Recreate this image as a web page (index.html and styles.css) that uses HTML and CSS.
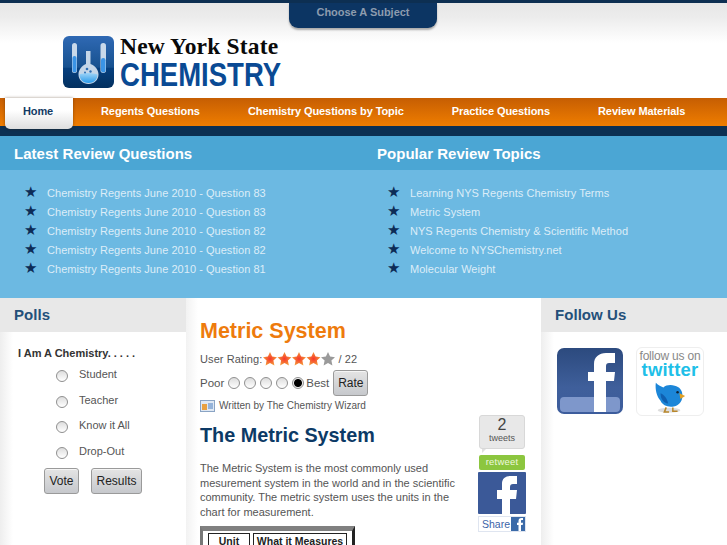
FILE: index.html
```html
<!DOCTYPE html>
<html lang="en">
<head>
<meta charset="utf-8">
<title>New York State Chemistry</title>
<link rel="stylesheet" href="styles.css">
</head>
<body>
<header class="header">
  <div class="subject-wrap"><a class="subject-tab">Choose A Subject</a></div>
  <div class="logo">
    <svg class="logo-icon" width="51" height="52" viewBox="0 0 51 52">
      <defs>
        <linearGradient id="lg1" x1="0" y1="0" x2="0" y2="1"><stop offset="0" stop-color="#2f69b4"/><stop offset="0.6" stop-color="#17518f"/><stop offset="0.62" stop-color="#063f7e"/><stop offset="1" stop-color="#03305f"/></linearGradient>
        <linearGradient id="lg2" x1="0" y1="0" x2="0" y2="1"><stop offset="0" stop-color="#9fd4f7"/><stop offset="1" stop-color="#2a9bea"/></linearGradient>
      </defs>
      <rect width="51" height="52" rx="6" fill="url(#lg1)"/>
      <rect x="9" y="7" width="5" height="30" rx="2.5" fill="#c9d9ea"/>
      <rect x="9.5" y="20" width="4" height="16.5" rx="2" fill="#3a94e6"/>
      <rect x="37.5" y="7" width="5.5" height="30" rx="2.7" fill="#c9d9ea"/>
      <rect x="38" y="22" width="4.5" height="14.5" rx="2.2" fill="#3a94e6"/>
      <path d="M23 15h4.500v13c5 2 8 6 8 10.500 0 5.500-4.500 9.500-10 9.500s-10-4-10-9.500c0-4.500 3-8.500 7.500-10.500z" fill="#c4d6e8"/>
      <path d="M16.500 38.500c5-2 12-2 18 0 0 5-4 8.500-9 8.500s-9-3.500-9-8.500z" fill="url(#lg2)"/>
      <circle cx="24" cy="33" r="1.300" fill="#2c6fb5"/><circle cx="27.500" cy="35.500" r="1.200" fill="#2c6fb5"/><circle cx="22" cy="36.500" r="1" fill="#2c6fb5"/>
    </svg>
    <div class="logo-text">
      <div class="logo-ny">New York State</div>
      <div class="logo-chem">CHEMISTRY</div>
    </div>
  </div>
</header>

<nav class="nav">
  <a class="nav-item nav-home">Home</a>
  <a class="nav-item">Regents Questions</a>
  <a class="nav-item">Chemistry Questions by Topic</a>
  <a class="nav-item">Practice Questions</a>
  <a class="nav-item">Review Materials</a>
</nav>
<div class="nav-base"></div>

<section class="blue">
  <div class="blue-col">
    <h3 class="blue-head">Latest Review Questions</h3>
    <ul class="blue-list">
      <li>Chemistry Regents June 2010 - Question 83</li>
      <li>Chemistry Regents June 2010 - Question 83</li>
      <li>Chemistry Regents June 2010 - Question 82</li>
      <li>Chemistry Regents June 2010 - Question 82</li>
      <li>Chemistry Regents June 2010 - Question 81</li>
    </ul>
  </div>
  <div class="blue-col">
    <h3 class="blue-head">Popular Review Topics</h3>
    <ul class="blue-list">
      <li>Learning NYS Regents Chemistry Terms</li>
      <li>Metric System</li>
      <li>NYS Regents Chemistry &amp; Scientific Method</li>
      <li>Welcome to NYSChemistry.net</li>
      <li>Molecular Weight</li>
    </ul>
  </div>
</section>

<div class="columns">
  <aside class="side side-left">
    <h3 class="side-head">Polls</h3>
    <div class="poll">
      <div class="poll-q">I Am A Chemistry. . . . .</div>
      <label class="poll-opt"><input class="radio" type="radio" name="p"><span>Student</span></label>
      <label class="poll-opt"><input class="radio" type="radio" name="p"><span>Teacher</span></label>
      <label class="poll-opt"><input class="radio" type="radio" name="p"><span>Know it All</span></label>
      <label class="poll-opt"><input class="radio" type="radio" name="p"><span>Drop-Out</span></label>
      <div class="poll-btns"><button class="btn btn-vote">Vote</button><button class="btn btn-results">Results</button></div>
    </div>
  </aside>

  <main class="content">
    <h1 class="title">Metric System</h1>
    <div class="rating">User Rating:<span class="stars"><svg width="72" height="14" viewBox="0 0 72 14">
      <defs>
        <radialGradient id="rs"><stop offset="0" stop-color="#f8352b"/><stop offset="1" stop-color="#f39a3a"/></radialGradient>
        <path id="st" d="M7 0l2.100 4.600 4.900.600-3.600 3.400 1 5-4.400-2.500-4.400 2.500 1-5L0 5.200l4.900-.600z"/>
      </defs>
      <use href="#st" fill="url(#rs)"/><use href="#st" x="14.500" fill="url(#rs)"/><use href="#st" x="29" fill="url(#rs)"/><use href="#st" x="43.500" fill="url(#rs)"/><use href="#st" x="58" fill="#9a9a9a"/>
    </svg></span> / 22</div>
    <div class="rate-row">
      <span>Poor</span>
      <input class="radio radio-s" type="radio" name="r">
      <input class="radio radio-s" type="radio" name="r">
      <input class="radio radio-s" type="radio" name="r">
      <input class="radio radio-s" type="radio" name="r">
      <input class="radio radio-s" type="radio" name="r" checked>
      <span class="rate-best">Best</span>
      <button class="btn btn-rate">Rate</button>
    </div>
    <div class="author">
      <svg width="15" height="12" viewBox="0 0 15 12"><rect x=".5" y=".5" width="14" height="11" fill="#dfe8f3" stroke="#8aa4c4"/><rect x="2" y="4" width="5" height="6" fill="#e8a040"/><path d="M8 4h5M8 6h5M8 8h5" stroke="#4a7fc0"/></svg>
      <span>Written by The Chemistry Wizard</span>
    </div>
    <div class="article">
      <div class="article-main">
        <h2 class="article-title">The Metric System</h2>
        <p class="article-text">The Metric System is the most commonly used mesurement system in the world and in the scientific community. The metric system uses the units in the chart for measurement.</p>
        <div class="chart">
          <table class="chart-table"><tr><th class="chart-unit">Unit</th><th>What it Measures</th></tr></table>
        </div>
      </div>
      <div class="share">
        <div class="tweet-box"><span class="tweet-num">2</span><span class="tweet-lbl">tweets</span></div>
        <div class="retweet">retweet</div>
        <svg class="fb-big" width="48" height="42" viewBox="0 0 48 42"><rect width="48" height="42" rx="1" fill="#3b5998"/><path d="M24 42V27h-5v-9h5v-6c0-6 4-8 9-8h6v8h-4c-2 0-3 1-3 3v3h7l-1 9h-6v15z" fill="#fff"/></svg>
        <div class="fb-share"><span>Share</span><svg width="14" height="14" viewBox="0 0 14 14"><rect width="14" height="14" fill="#3b6aa8"/><path d="M7.500 14V8H6V5.800h1.500V4c0-2 1-3 3-3H12v2h-1c-.8 0-1 .4-1 1v1.800h2L11.700 8H10v6z" fill="#fff"/></svg></div>
      </div>
    </div>
  </main>

  <aside class="side side-right">
    <h3 class="side-head">Follow Us</h3>
    <div class="follow">
      <svg width="66" height="66" viewBox="0 0 66 66">
        <defs><linearGradient id="fbg" x1="0" y1="0" x2="0" y2="1"><stop offset="0" stop-color="#2c4a7e"/><stop offset="0.6" stop-color="#3f5f9b"/><stop offset="1" stop-color="#3c5c9c"/></linearGradient></defs>
        <rect width="66" height="66" rx="7" fill="url(#fbg)"/>
        <rect x="3" y="49" width="60" height="15" rx="4" fill="#7e97cb"/>
        <path d="M37 64V33h-6v-9h6v-8c0-7 5-11 12-11h9v10h-6c-2 0-3 1-3 3v6h9l-1 9h-8v31z" fill="#fff"/>
      </svg>
      <div class="tw-card">
        <div class="tw-follow">follow us on</div>
        <div class="tw-name">twitter</div>
        <svg width="34" height="34" viewBox="0 0 36 36">
          <ellipse cx="17" cy="32" rx="12" ry="2.500" fill="#ddd"/>
          <path d="M3 3c2 2 5 4 8 5 3-3 8-3 12-2 5 1 8 5 8 9 1 6-3 12-9 13-6 1-12-1-14-6C4 18 2 10 3 3z" fill="#1c86d8"/>
          <path d="M8 14c3 1 7 5 8 11-5-1-8-5-8-11z" fill="#0f5fb0"/>
          <path d="M28 14l6 3-5 3z" fill="#e3a020"/>
          <circle cx="26" cy="13" r="1.300" fill="#123"/>
          <path d="M14 29l-2 5h5M21 29l0 4h5" stroke="#b8862a" stroke-width="1.600" fill="none"/>
        </svg>
      </div>
    </div>
  </aside>
</div>
</body>
</html>
```

FILE: styles.css
```css
* { box-sizing: border-box; }
html, body { margin: 0; padding: 0; height: 545px; overflow: hidden; }
body { width: 727px; background: #fff; font-family: "Liberation Sans", Arial, sans-serif; color: #444; font-size: 11px; }

.header {
  height: 98px;
  border-top: 3px solid #0d2f52;
  background: linear-gradient(#e7e7e7 0, #ececec 14px, #fff 40px);
}
.subject-wrap { display: flex; justify-content: center; height: 33px; margin-left: -1px; }
.subject-tab {
  width: 148px; height: 25px;
  background: #0c3563;
  border-radius: 0 0 9px 9px;
  box-shadow: 0 2px 2px #aaa;
  color: #8d9cae;
  font-weight: bold; font-size: 11px; letter-spacing: -.02px;
  text-align: center; line-height: 19px;
}
.logo { display: flex; margin-left: 63px; gap: 6px; height: 52px; }
.logo-icon { display: block; flex: none; }
.logo-text { width: 170px; }
.logo-ny { font-family: "Liberation Serif", serif; font-weight: bold; font-size: 23.500px; line-height: 21px; color: #0a0a0a; letter-spacing: .18px; }
.logo-chem {
  font-weight: bold; font-size: 34px; line-height: 30px; color: #0a4a94;
  transform: scaleX(.81); transform-origin: left center; white-space: nowrap; margin-top: 2px;
}

.nav {
  display: flex; height: 28px; padding-left: 5px;
  background: linear-gradient(#c65e03, #ef7d00);
  position: relative;
}
.nav-item {
  display: block; flex: none; padding: 0 24px; color: #fff; font-weight: bold; font-size: 11px; letter-spacing: -.08px;
  line-height: 27px; white-space: nowrap;
}
.nav-home {
  width: 68px; height: 31px; padding: 0 2px 0 0; margin-right: 4px; text-align: center; color: #123a63;
  background: linear-gradient(#fff 40%, #dedede);
  border-radius: 0 0 5px 5px;
  box-shadow: 0 0 3px rgba(60, 30, 0, .5);
  position: relative; z-index: 1;
}
.nav-base { height: 10px; background: #0c3052; }

.blue { display: grid; grid-template-columns: 364px 363px; height: 162px; background: #6cb9e2; }
.blue-head {
  margin: 0; height: 34px; padding-left: 14px; background: #4ba6d4;
  color: #fff; font-size: 15px; font-weight: bold; letter-spacing: .03px; line-height: 36px;
}
.blue-list { list-style: none; margin: 0; padding: 14px 0 0 47px; color: #dcedf8; font-size: 11px; letter-spacing: .04px; }
.blue-list li { height: 19px; line-height: 19px; position: relative; white-space: nowrap; }
.blue-list li::before {
  content: "★"; position: absolute; left: -23px; top: -1px;
  font-family: "DejaVu Sans", sans-serif; font-size: 15px; color: #0c2c57;
}
.blue-col + .blue-col .blue-head { padding-left: 13px; }
.blue-col + .blue-col .blue-list { padding-left: 46px; }

.columns { display: grid; grid-template-columns: 186px 355px 186px; }
.side { background: linear-gradient(90deg, #eee, #fff 13px); height: 247px; }
.side-head {
  margin: 0; height: 34px; padding-left: 14px; background: #e8e8e8;
  color: #24507a; font-size: 15px; font-weight: bold; letter-spacing: .05px; line-height: 34px;
}
.poll { padding: 15px 0 0 18px; }
.poll-q { font-weight: bold; font-size: 11px; letter-spacing: 0; color: #333; line-height: 13px; margin-bottom: 4px; }
.poll-opt { display: flex; align-items: flex-start; height: 25.500px; padding-left: 38px; line-height: 20px; letter-spacing: 0; color: #555; }
.poll-opt span { margin-left: 11px; }
.radio {
  appearance: none; -webkit-appearance: none; flex: none;
  width: 12px; height: 12px; margin: 6px 0 0; border-radius: 50%;
  border: 1px solid #8f8f8f; background: linear-gradient(#ddd, #fff);
}
.radio:checked { background: radial-gradient(circle, #000 0 3.500px, #f0f0f0 4.500px); }
.poll-btns { display: flex; gap: 12px; margin: 2px 0 0 26px; }
.btn {
  font-family: inherit; font-size: 12px; letter-spacing: 0; color: #222;
  height: 26px; padding: 0;
  background: linear-gradient(#e4e4e4, #c6c8cc);
  border: 1px solid #9a9a9a; border-radius: 3px;
  box-shadow: inset 0 1px 0 #f5f5f5;
}
.btn-vote { width: 35px; }
.btn-results { width: 51px; }

.content { padding: 21px 14px 0 14px; background: linear-gradient(90deg, #f2f2f2, #fff 12px); }
.title { margin: 0; font-size: 21.500px; line-height: 25px; font-weight: bold; color: #ee7b0d; }
.rating { display: flex; align-items: center; height: 16px; margin-top: 7px; letter-spacing: .1px; font-size: 11px; color: #555; white-space: pre; }
.stars { display: block; height: 14px; margin-left: 1px; }
.stars svg { display: block; }
.rate-row { display: flex; align-items: center; gap: 4px; height: 26px; margin-top: 3px; font-size: 11.500px; letter-spacing: 0; color: #555; }
.radio-s { margin: 0; }
.rate-best { margin-left: -2px; }
.btn-rate { width: 35px; }
.author { display: flex; align-items: center; gap: 4px; height: 14px; margin-top: 2px; font-size: 10px; letter-spacing: .02px; color: #555; }
.author svg { display: block; margin-top: 1px; }

.article { display: flex; justify-content: space-between; margin-top: 3px; }
.article-main { width: 264px; }
.article-title { margin: 8px 0 0; font-size: 19.800px; line-height: 24px; font-weight: bold; color: #0c3a66; white-space: nowrap; }
.article-text { margin: 14px 0 0; font-size: 11px; line-height: 14.600px; letter-spacing: 0; color: #555; }
.chart { width: 155px; height: 40px; margin-top: 7px; padding: 2px; background: #fff; border-style: solid; border-width: 5px 3px 3px; border-color: #808080 #222 #222 #777; }
.chart-table { border-collapse: separate; border-spacing: 3px 0; width: 145px; table-layout: fixed; }
.chart-table th { border: 1px solid #222; font-size: 10.500px; padding: 1px 0; color: #222; line-height: 12px; white-space: nowrap; }
.chart-table .chart-unit { width: 42px; }

.share { width: 48px; margin-right: 1px; display: flex; flex-direction: column; align-items: center; }
.tweet-box {
  width: 46px; height: 34px; position: relative;
  background: #e8e8e8; border: 1px solid #d8d8d8; border-radius: 3px;
  display: flex; flex-direction: column; align-items: center;
}
.tweet-box::after {
  content: ""; position: absolute; left: 2px; bottom: -5px; border-style: solid; border-width: 4px 4px 0 0;
  border-color: #e0e0e0 transparent transparent transparent;
}
.tweet-num { font-size: 16px; line-height: 18px; color: #444; }
.tweet-lbl { font-size: 9px; line-height: 9px; font-weight: normal; color: #555; }
.retweet { width: 46px; height: 15px; margin-top: 6px; background: #8cc63f; border-radius: 2px; color: #eef7dd; font-size: 9.500px; text-align: center; line-height: 14px; letter-spacing: .2px; }
.fb-big { display: block; flex: none; margin-top: 2px; }
.fb-share { flex: none; width: 48px; height: 16px; margin-top: 2px; border: 1px solid #dfe5f0; display: flex; justify-content: space-between; align-items: center; padding: 0 0 0 3px; color: #3b63a8; font-size: 10.500px; }
.fb-share svg { display: block; flex: none; }

.follow { display: flex; gap: 13px; padding: 16px 0 0 16px; align-items: flex-start; }
.follow > svg { display: block; }
.tw-card { width: 68px; height: 69px; margin-top: -1px; border: 1px solid #eee; border-radius: 6px; text-align: center; display: flex; flex-direction: column; align-items: center; background: #fff; }
.tw-follow { font-size: 12px; color: #888; line-height: 12px; margin-top: 2px; white-space: nowrap; letter-spacing: -.2px; }
.tw-name { font-size: 18.500px; font-weight: bold; color: #20bfe8; line-height: 16px; letter-spacing: .2px; }
.tw-card svg { display: block; margin-top: 2px; }
```
